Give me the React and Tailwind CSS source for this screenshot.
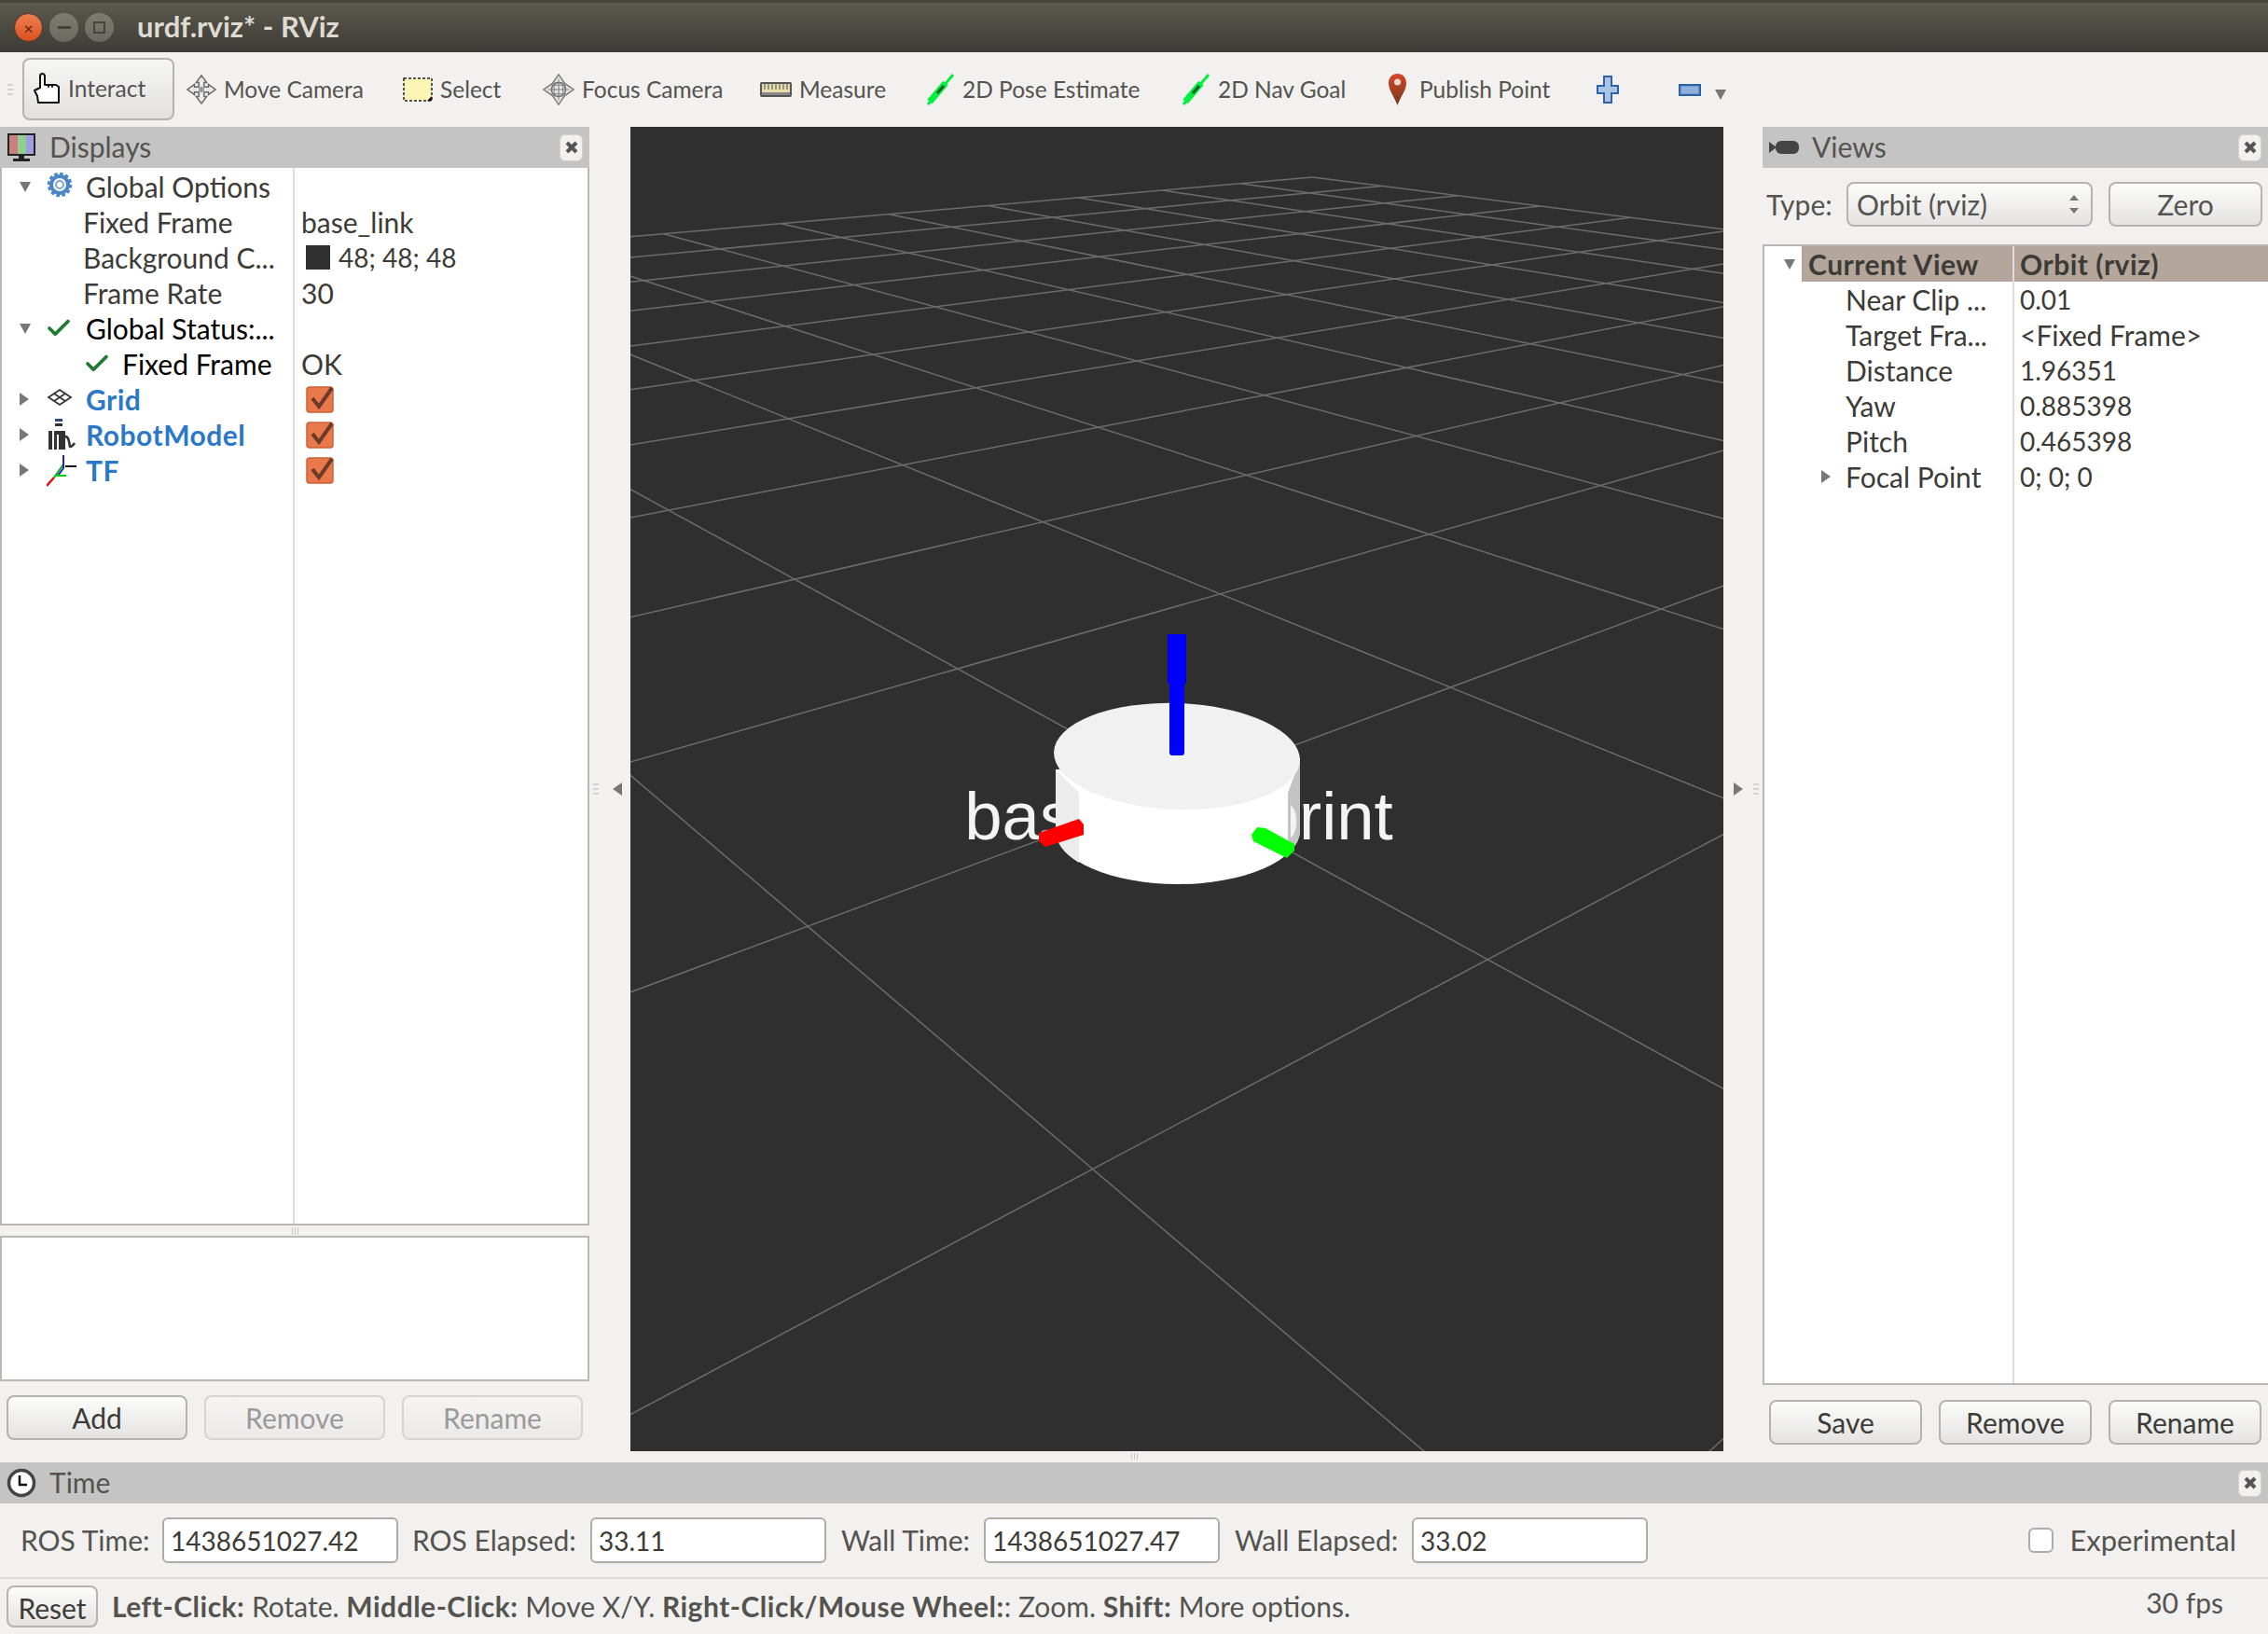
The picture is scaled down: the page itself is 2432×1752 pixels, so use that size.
import React from 'react';
import { Check } from 'lucide-react';

const FONT = 'font-["Lato","Noto_Sans",sans-serif]';

// Arrow triangles used in the tree views and next to the splitters
const ArrowDown = () => (
    <svg width="14" height="14" viewBox="0 0 14 14" className="shrink-0"><path d="M1 2h12L7 13z" fill="#777" /></svg>
);
const ArrowRight = () => (
    <svg width="12" height="16" viewBox="0 0 12 16" className="shrink-0"><path d="M1 1l10 7-10 7z" fill="#777" /></svg>
);

const CloseBtn = () => (
    <button className="w-[25px] h-[29px] rounded-md bg-[#f2f1f0] border border-[#d4d3d0] flex items-center justify-center shrink-0">
        <svg width="14" height="14" viewBox="0 0 14 14"><path d="M2 2l10 10M12 2L2 12" stroke="#555" strokeWidth="4" /></svg>
    </button>
);

const DockHeader = ({ icon, title }) => (
    <div className="h-[44px] bg-[#c4c4c4] flex items-center pl-[7px] pr-[7px] shrink-0">
        <div className="w-[46px] flex items-center shrink-0">{icon}</div>
        <span className="text-[30px] text-[#55534e] -mt-[2px]">{title}</span>
        <div className="ml-auto"><CloseBtn /></div>
    </div>
);

const GtkButton = ({ children, disabled, className }) => (
    <button className={`h-[48px] rounded-lg border-2 text-[30px] flex items-center justify-center bg-gradient-to-b ${disabled ? 'border-[#d6d4d1] text-[#9a9a98] from-[#f5f4f3] to-[#ebeae8]' : 'border-[#b5b3ae] text-[#3c3b37] from-[#fcfcfb] to-[#e4e3e1]'} ${className}`}>
        {children}
    </button>
);

const Row = ({ arrow, children, value, labelClass = '' }) => (
    <div className="h-[38px] flex items-center">
        <div className={`w-[313px] shrink-0 flex items-center h-full overflow-hidden whitespace-nowrap ${labelClass}`}>
            {arrow && <div className="w-[30px] ml-[18px] flex items-center shrink-0">{arrow}</div>}
            {children}
        </div>
        {value}
    </div>
);

const CheckBox = () => (
    <svg width="32" height="30" viewBox="0 0 32 30" className="ml-[13px]">
        <rect x="1" y="2" width="28" height="27" rx="3" fill="#e9784a" stroke="#c96238" strokeWidth="1.5" />
        <path d="M7 14l7 9L28 3" fill="none" stroke="#6b3a28" strokeWidth="4" />
    </svg>
);

const Val = ({ children }) => <span className="pl-[8px]">{children}</span>;

const GearIcon = () => (
    <svg width="28" height="28" viewBox="0 0 28 28" className="shrink-0 -mt-[4px]">
        <circle cx="14" cy="14" r="9" fill="none" stroke="#4a86c8" strokeWidth="4" />
        <circle cx="14" cy="14" r="11.5" fill="none" stroke="#4a86c8" strokeWidth="3.5" strokeDasharray="3.5 2.5" />
        <circle cx="14" cy="14" r="4" fill="none" stroke="#7aa7d8" strokeWidth="2" />
    </svg>
);

const GridIcon = () => (
    <svg width="28" height="20" viewBox="0 0 28 20" className="shrink-0 -mt-[4px]">
        <path d="M14 2L26 10 14 18 2 10zM8 6l12 8M20 6L8 14" fill="none" stroke="#333" strokeWidth="1.8" />
    </svg>
);

const RobotIcon = () => (
    <svg width="32" height="36" viewBox="0 0 32 36" className="shrink-0">
        <rect x="9" y="1" width="8" height="3" fill="#2a4a90" />
        <rect x="9" y="6" width="8" height="3" fill="#333" />
        <path d="M2 14h18v20H2z" fill="#333" />
        <path d="M7 14v20M12 18v16" stroke="#fff" strokeWidth="2" />
        <path d="M20 20c4 0 4 6 5 11 2 0 3-1 5-4" fill="none" stroke="#333" strokeWidth="2.5" />
    </svg>
);

const TfIcon = () => (
    <svg width="34" height="36" viewBox="0 0 34 36" className="shrink-0">
        <path d="M18 12L8 26" stroke="#00b000" strokeWidth="2" />
        <path d="M18 2v14L12 24" fill="none" stroke="#2020d0" strokeWidth="2" />
        <path d="M20 14h12" stroke="#111" strokeWidth="2" />
        <path d="M9 24h12" stroke="#00d000" strokeWidth="2" />
        <path d="M8 26L0 35" stroke="#e01010" strokeWidth="2.5" />
    </svg>
);

const MonitorIcon = () => (
    <svg width="32" height="32" viewBox="0 0 32 32">
        <rect x="1" y="1" width="30" height="24" fill="#222" />
        <rect x="3" y="3" width="9" height="20" fill="#c98080" />
        <rect x="12" y="3" width="9" height="20" fill="#90d090" />
        <rect x="21" y="3" width="8" height="20" fill="#a0a0e0" />
        <path d="M13 25h6v3h6v3H7v-3h6z" fill="#222" />
    </svg>
);

const CameraIcon = () => (
    <svg width="32" height="18" viewBox="0 0 32 18">
        <path d="M0 3l8 6-8 6z" fill="#444" />
        <rect x="7" y="2" width="25" height="14" rx="6" fill="#444" />
    </svg>
);

const ClockIcon = () => (
    <svg width="32" height="32" viewBox="0 0 32 32">
        <circle cx="16" cy="16" r="13.5" fill="#fff" stroke="#444" strokeWidth="3.5" />
        <path d="M14 8v10h8" fill="none" stroke="#111" strokeWidth="2.5" />
    </svg>
);

const HandIcon = () => (
    <svg width="32" height="34" viewBox="0 0 32 34">
        <path d="M2 19l6-3V3.5a2.5 2.5 0 015 0V13h4v2-2h4v2-2h4l3 2v17H6l-1-7z" fill="#fff" stroke="#111" strokeWidth="2" strokeLinejoin="round" />
    </svg>
);

const MoveIcon = () => (
    <svg width="34" height="34" viewBox="0 0 34 34">
        <path d="M17 1l6 8h-3v5h5v-3l8 6-8 6v-3h-5v5h3l-6 8-6-8h3v-5H9v3l-8-6 8-6v3h5V9h-3z" fill="#e8e8e8" stroke="#666" strokeWidth="1.5" />
        <path d="M14 14h6v6h-6z" fill="#999" />
    </svg>
);

const SelectIcon = () => (
    <svg width="32" height="26" viewBox="0 0 32 26">
        <rect x="1" y="1" width="30" height="24" fill="#fdf5b5" stroke="#222" strokeWidth="1.5" strokeDasharray="3 2" />
        <path d="M26 25h5v-5z" fill="#111" />
    </svg>
);

const FocusIcon = () => (
    <svg width="36" height="36" viewBox="0 0 36 36">
        <path d="M18 1l7 10 10 7-10 7-7 10-7-10-10-7 10-7z" fill="#e4e4e4" stroke="#777" strokeWidth="1.5" />
        <circle cx="18" cy="18" r="8" fill="none" stroke="#666" strokeWidth="1.5" />
        <path d="M18 6v24M6 18h24M13 10v16M23 10v16M10 13h16M10 23h16" stroke="#777" strokeWidth="1" />
    </svg>
);

const RulerIcon = () => (
    <svg width="34" height="16" viewBox="0 0 34 16">
        <rect x="1" y="1" width="32" height="14" rx="1" fill="#e8dca8" stroke="#555" strokeWidth="2" />
        <path d="M5 2v6M9 2v6M13 2v6M17 2v6M21 2v6M25 2v6M29 2v6" stroke="#666" strokeWidth="1.2" />
        <rect x="2" y="11" width="30" height="3" fill="#888" />
    </svg>
);

const ArrowGreen = () => (
    <svg width="32" height="34" viewBox="0 0 32 34">
        <path d="M30 1L3 33" stroke="#00f040" strokeWidth="3" />
        <path d="M22 10L5 30" stroke="#00f040" strokeWidth="7" />
        <path d="M20 13l-7 8" stroke="#14602a" strokeWidth="3" />
    </svg>
);

const PinIcon = () => (
    <svg width="21" height="34" viewBox="0 0 21 34" className="-ml-[5px]">
        <defs>
            <linearGradient id="pin" x1="0" y1="0" x2="0" y2="1">
                <stop offset="0" stopColor="#d8452a" />
                <stop offset="1" stopColor="#6e3a18" />
            </linearGradient>
        </defs>
        <path d="M10.5 0C16 0 20 4 20 10c0 8-6 14-9.5 24C7 24 1 18 1 10 1 4 5 0 10.5 0z" fill="url(#pin)" />
        <circle cx="10.5" cy="9" r="3.5" fill="#f2d8cc" />
    </svg>
);

const PlusIcon = () => (
    <svg width="24" height="30" viewBox="0 0 24 30">
        <path d="M8 1h8v10h7v8h-7v10H8V19H1v-8h7z" fill="#a9c4e6" stroke="#2f63a8" strokeWidth="2" />
    </svg>
);

const MinusIcon = () => (
    <svg width="24" height="13" viewBox="0 0 24 13">
        <rect x="1" y="1" width="22" height="11" fill="#8fb0da" stroke="#2f63a8" strokeWidth="2.5" />
    </svg>
);

const ToolItem = ({ icon, label, className, iconBox = 'w-[32px]' }) => (
    <div className={`flex items-center gap-[8px] h-full shrink-0 ${className}`}>
        <div className={`${iconBox} flex justify-center shrink-0`}>{icon}</div>
        <span className="text-[24.5px] text-[#55534e]">{label}</span>
    </div>
);

// Perspective grid: homography measured from the line crossings in the screenshot
const project = (a, b) => {
    const w = 1 + 0.149 * a + 0.1725 * b;
    return [(525 * a - 58 * b + 1262) / w, (0.8 * a - 5.3 * b + 846) / w];
};

const gridLines = () => {
    const lines = [];
    for (let i = -10; i <= 10; i++) {
        const b0 = Math.max(-10, (0.1 - 1 - 0.149 * i) / 0.1725);
        if (b0 < 10) {
            const [x1, y1] = project(i, b0);
            const [x2, y2] = project(i, 10);
            lines.push({ x1, y1, x2, y2 });
        }
        const a0 = Math.max(-10, (0.1 - 1 - 0.1725 * i) / 0.149);
        if (a0 < 10) {
            const [x1, y1] = project(a0, i);
            const [x2, y2] = project(10, i);
            lines.push({ x1, y1, x2, y2 });
        }
    }
    return lines;
};

const FrameLabel = (props) => (
    <text x="1264" y="900" textAnchor="middle" fontFamily="Liberation Sans" fontSize="72.5" fill="#f4f4f4" {...props}>base_footprint</text>
);

const Scene = () => (
    <svg viewBox="676 136 1172 1420" className="w-full h-full block">
        <defs>
            <clipPath id="frame-label-right"><rect x="1384" y="840" width="20" height="70" /></clipPath>
        </defs>
        <rect x="676" y="136" width="1172" height="1420" fill="#2f2f2f" />
        {gridLines().map((l, i) => (
            <line key={i} {...l} stroke="#6c6c6c" strokeWidth="1.5" />
        ))}
        <FrameLabel />
        {/* cylinder */}
        <path d="M1132 825V890A131 58 0 0 0 1394 890V813z" fill="#ffffff" />
        <path d="M1132 825V890A131 58 0 0 0 1157 925V850z" fill="#ececec" />
        <path d="M1381 850V916A131 58 0 0 0 1394 890V815z" fill="#c4c4c4" />
        <FrameLabel clipPath="url(#frame-label-right)" />
        <ellipse cx="1262" cy="811" rx="132" ry="57" fill="#f1f1f1" transform="rotate(2 1262 811)" />
        {/* axes */}
        <rect x="1254" y="720" width="16" height="90" rx="3" fill="#0000ff" />
        <rect x="1252" y="680" width="20" height="53" fill="#0000e0" />
        <rect x="1254" y="680" width="16" height="53" fill="#0000ff" />
        <path d="M1114 893L1157 878 1162 884V895L1121 908 1114 902z" fill="#ff0000" />
        <path d="M1342 895L1348 887 1357 888 1388 905V912L1380 920 1344 902z" fill="#00ff00" />
    </svg>
);

const HandleDots = () => (
    <div className="flex flex-col gap-[3px] shrink-0">
        <div className="w-[6px] h-[2px] bg-[#d4d3d0]" />
        <div className="w-[6px] h-[2px] bg-[#d4d3d0]" />
        <div className="w-[6px] h-[2px] bg-[#d4d3d0]" />
    </div>
);

const Cols = () => <div className="absolute top-0 bottom-0 left-[312px] w-[2px] bg-[#dedddb]" />;

const TimeField = ({ label, value, labelClass }) => (
    <>
        <span className={`text-[30px] text-[#55534e] shrink-0 whitespace-nowrap ${labelClass}`}>{label}</span>
        <div className="w-[253px] h-[49px] shrink-0 bg-white border-2 border-[#aeaca7] rounded-md flex items-center pl-[7px] text-[28px] text-[#3c3b37]">{value}</div>
    </>
);

const B = ({ children }) => <b className="tracking-[0.5px]">{children}</b>;

export default function App() {
    return (
        <div className={`w-[2432px] h-[1752px] flex flex-col bg-[#f2f1f0] overflow-hidden ${FONT}`}>
            {/* Title bar */}
            <div className="h-[56px] shrink-0 bg-gradient-to-b from-[#5c594d] to-[#3c3b37] flex items-center pl-[15px] border-t-[3px] border-[#48463e]">
                <div className="w-[31px] h-[31px] rounded-full bg-gradient-to-b from-[#ee7f50] to-[#dc4f1c] border border-[#5a3a2a] flex items-center justify-center text-[#5a2410] text-[18px] leading-none">×</div>
                <div className="w-[31px] h-[31px] ml-[7px] rounded-full bg-gradient-to-b from-[#7e7c72] to-[#6a6860] flex items-center justify-center">
                    <div className="w-[14px] h-[3px] bg-[#45433c]" />
                </div>
                <div className="w-[31px] h-[31px] ml-[7px] rounded-full bg-gradient-to-b from-[#7e7c72] to-[#6a6860] flex items-center justify-center">
                    <div className="w-[13px] h-[13px] border-2 border-[#45433c]" />
                </div>
                <span className="ml-[25px] text-[31px] font-bold text-[#dfdbd2] -mt-[2px]">urdf.rviz* - RViz</span>
            </div>

            {/* Toolbar */}
            <div className="h-[80px] shrink-0 flex items-center">
                <div className="w-[24px] pl-[8px]"><HandleDots /></div>
                <div className="w-[163px] h-[67px] shrink-0 -mt-[2px] rounded-lg border-2 border-[#b5b3ae] bg-gradient-to-b from-[#f6f6f5] to-[#e2e1df] flex items-center pl-[9px] gap-[6px]">
                    <HandIcon />
                    <span className="text-[24.5px] text-[#55534e]">Interact</span>
                </div>
                <ToolItem icon={<MoveIcon />} label="Move Camera" className="w-[232px] ml-[13px]" />
                <ToolItem icon={<SelectIcon />} label="Select" className="w-[150px]" />
                <ToolItem icon={<FocusIcon />} label="Focus Camera" className="w-[233px]" iconBox="w-[34px]" />
                <ToolItem icon={<RulerIcon />} label="Measure" className="w-[177px]" iconBox="w-[34px]" />
                <ToolItem icon={<ArrowGreen />} label="2D Pose Estimate" className="w-[274px]" />
                <ToolItem icon={<ArrowGreen />} label="2D Nav Goal" className="w-[222px]" />
                <ToolItem icon={<PinIcon />} label="Publish Point" className="w-[224px]" iconBox="w-[26px]" />
                <div className="w-[88px] flex shrink-0"><PlusIcon /></div>
                <MinusIcon />
                <svg width="14" height="14" viewBox="0 0 14 14" className="ml-[14px] mt-[10px]"><path d="M1 2h12L7 13z" fill="#777" /></svg>
            </div>

            {/* Main area */}
            <div className="h-[1420px] shrink-0 flex">
                {/* Displays */}
                <div className="w-[632px] shrink-0 flex flex-col">
                    <DockHeader icon={<MonitorIcon />} title="Displays" />
                    <div className="relative h-[1134px] shrink-0 pt-[1px] bg-white border-x-2 border-b-2 border-[#b9b7b2] text-[30px] text-[#3c3b37]">
                        <Cols />
                        <Row arrow={<ArrowDown />}>
                            <div className="w-[42px] shrink-0"><GearIcon /></div>
                            <span>Global Options</span>
                        </Row>
                        <Row labelClass="pl-[87px]" value={<Val>base_link</Val>}>Fixed Frame</Row>
                        <Row labelClass="pl-[87px]" value={
                            <span className="flex items-center text-[28px]">
                                <span className="ml-[13px] w-[26px] h-[26px] bg-[#303030] mr-[9px]" />48; 48; 48
                            </span>
                        }>Background C...</Row>
                        <Row labelClass="pl-[87px]" value={<Val>30</Val>}>Frame Rate</Row>
                        <Row arrow={<ArrowDown />} labelClass="text-black">
                            <div className="w-[42px] shrink-0"><Check size={30} strokeWidth={3} color="#1f7a2e" className="-ml-[2px]" /></div>
                            <span>Global Status:...</span>
                        </Row>
                        <Row labelClass="pl-[87px] text-black" value={<Val>OK</Val>}>
                            <div className="w-[42px] shrink-0"><Check size={30} strokeWidth={3} color="#1f7a2e" /></div>
                            <span>Fixed Frame</span>
                        </Row>
                        <Row arrow={<ArrowRight />} labelClass="font-bold text-[#2b78c9] tracking-[0.5px]" value={<CheckBox />}>
                            <div className="w-[42px] shrink-0"><GridIcon /></div>
                            <span>Grid</span>
                        </Row>
                        <Row arrow={<ArrowRight />} labelClass="font-bold text-[#2b78c9] tracking-[0.5px]" value={<CheckBox />}>
                            <div className="w-[42px] shrink-0"><RobotIcon /></div>
                            <span>RobotModel</span>
                        </Row>
                        <Row arrow={<ArrowRight />} labelClass="font-bold text-[#2b78c9] tracking-[0.5px]" value={<CheckBox />}>
                            <div className="w-[42px] shrink-0"><TfIcon /></div>
                            <span>TF</span>
                        </Row>
                    </div>
                    <div className="h-[11px] shrink-0 flex justify-center items-center gap-[2px]">
                        <div className="w-[1px] h-[8px] bg-[#c8c7c4]" />
                        <div className="w-[1px] h-[8px] bg-[#c8c7c4]" />
                        <div className="w-[1px] h-[8px] bg-[#c8c7c4]" />
                    </div>
                    <div className="h-[156px] shrink-0 bg-white border-2 border-[#b9b7b2]" />
                    <div className="flex gap-[18px] pl-[7px] mt-[15px]">
                        <GtkButton className="w-[194px]">Add</GtkButton>
                        <GtkButton disabled className="w-[194px]">Remove</GtkButton>
                        <GtkButton disabled className="w-[194px]">Rename</GtkButton>
                    </div>
                </div>

                {/* left splitter */}
                <div className="w-[44px] shrink-0 flex items-center pl-[4px] gap-[14px]">
                    <HandleDots />
                    <svg width="12" height="16" viewBox="0 0 12 16"><path d="M11 1L1 8l10 7z" fill="#777" /></svg>
                </div>

                {/* 3D view */}
                <div className="w-[1172px] shrink-0">
                    <Scene />
                </div>

                {/* right splitter */}
                <div className="w-[42px] shrink-0 flex items-center pl-[10px] gap-[10px]">
                    <svg width="12" height="16" viewBox="0 0 12 16"><path d="M1 1l10 7-10 7z" fill="#777" /></svg>
                    <HandleDots />
                </div>

                {/* Views */}
                <div className="flex-1 min-w-0 flex flex-col">
                    <DockHeader icon={<CameraIcon />} title="Views" />
                    <div className="flex items-center h-[78px] mb-[4px] shrink-0 pl-[4px]">
                        <span className="text-[30px] text-[#55534e] w-[86px]">Type:</span>
                        <div className="w-[264px] h-[48px] rounded-lg border-2 border-[#b5b3ae] bg-gradient-to-b from-[#fcfcfb] to-[#e4e3e1] flex items-center pl-[9px] pr-[12px] text-[30px] text-[#55534e]">
                            <span>Orbit (rviz)</span>
                            <svg width="12" height="24" viewBox="0 0 12 24" className="ml-auto"><path d="M1 8l5-6 5 6zM1 16l5 6 5-6z" fill="#777" /></svg>
                        </div>
                        <GtkButton className="w-[165px] ml-[17px] text-[#55534e]">Zero</GtkButton>
                    </div>
                    <div className="relative h-[1223px] shrink-0 bg-white border-l-2 border-y-2 border-[#b9b7b2] text-[30px] text-[#3c3b37]">
                        <div className="absolute top-0 bottom-0 left-[266px] w-[2px] bg-[#dedddb]" />
                        <div className="h-[38px] flex items-center font-bold tracking-[0.5px]">
                            <div className="w-[40px] shrink-0 pl-[20px]"><ArrowDown /></div>
                            <div className="flex-1 h-full bg-[#b5a69b] flex items-center pl-[7px]">
                                <span className="w-[227px] shrink-0 whitespace-nowrap">Current View</span>
                                <span>Orbit (rviz)</span>
                            </div>
                        </div>
                        {[
                            ['Near Clip ...', '0.01', 'text-[28px]'],
                            ['Target Fra...', '<Fixed Frame>', ''],
                            ['Distance', '1.96351', 'text-[28px]'],
                            ['Yaw', '0.885398', 'text-[28px]'],
                            ['Pitch', '0.465398', 'text-[28px]'],
                        ].map(([k, v, cls]) => (
                            <div key={k} className="h-[38px] flex items-center pl-[87px]">
                                <span className="w-[187px] shrink-0 whitespace-nowrap">{k}</span>
                                <span className={cls}>{v}</span>
                            </div>
                        ))}
                        <div className="h-[38px] flex items-center pl-[60px]">
                            <div className="w-[27px] shrink-0"><ArrowRight /></div>
                            <span className="w-[187px] shrink-0 whitespace-nowrap">Focal Point</span>
                            <span className="text-[28px]">0; 0; 0</span>
                        </div>
                    </div>
                    <div className="flex gap-[18px] pl-[7px] mt-[16px]">
                        <GtkButton className="w-[164px]">Save</GtkButton>
                        <GtkButton className="w-[164px]">Remove</GtkButton>
                        <GtkButton className="w-[164px]">Rename</GtkButton>
                    </div>
                </div>
            </div>

            {/* horizontal splitter handle */}
            <div className="h-[12px] shrink-0 flex justify-center gap-[2px] pt-[2px]">
                <div className="w-[1px] h-[7px] bg-[#c8c7c4]" />
                <div className="w-[1px] h-[7px] bg-[#c8c7c4]" />
                <div className="w-[1px] h-[7px] bg-[#c8c7c4]" />
            </div>

            {/* Time */}
            <DockHeader icon={<ClockIcon />} title="Time" />
            <div className="h-[81px] shrink-0 flex items-center pl-[22px] pr-[34px] border-b-2 border-[#dddcda]">
                <TimeField label="ROS Time:" value="1438651027.42" labelClass="w-[152px]" />
                <TimeField label="ROS Elapsed:" value="33.11" labelClass="w-[206px] pl-[15px]" />
                <TimeField label="Wall Time:" value="1438651027.47" labelClass="w-[169px] pl-[16px]" />
                <TimeField label="Wall Elapsed:" value="33.02" labelClass="w-[206px] pl-[16px]" />
                <div className="ml-auto flex items-center gap-[17px]">
                    <div className="w-[27px] h-[27px] bg-white border-2 border-[#aeaca7] rounded-md" />
                    <span className="text-[31px] text-[#55534e]">Experimental</span>
                </div>
            </div>

            {/* Status bar */}
            <div className="flex-1 flex items-center pl-[7px] pr-[48px] text-[30px] text-[#55534e]">
                <button className="w-[98px] h-[45px] rounded-lg border-2 border-[#b5b3ae] bg-gradient-to-b from-[#fcfcfb] to-[#e4e3e1] text-[#3c3b37]">Reset</button>
                <span className="ml-[15px] whitespace-nowrap">
                    <B>Left-Click:</B> Rotate. <B>Middle-Click:</B> Move X/Y. <B>Right-Click/Mouse Wheel:</B>: Zoom. <B>Shift:</B> More options.
                </span>
                <span className="ml-auto -mt-[8px]">30 fps</span>
            </div>
        </div>
    );
}
